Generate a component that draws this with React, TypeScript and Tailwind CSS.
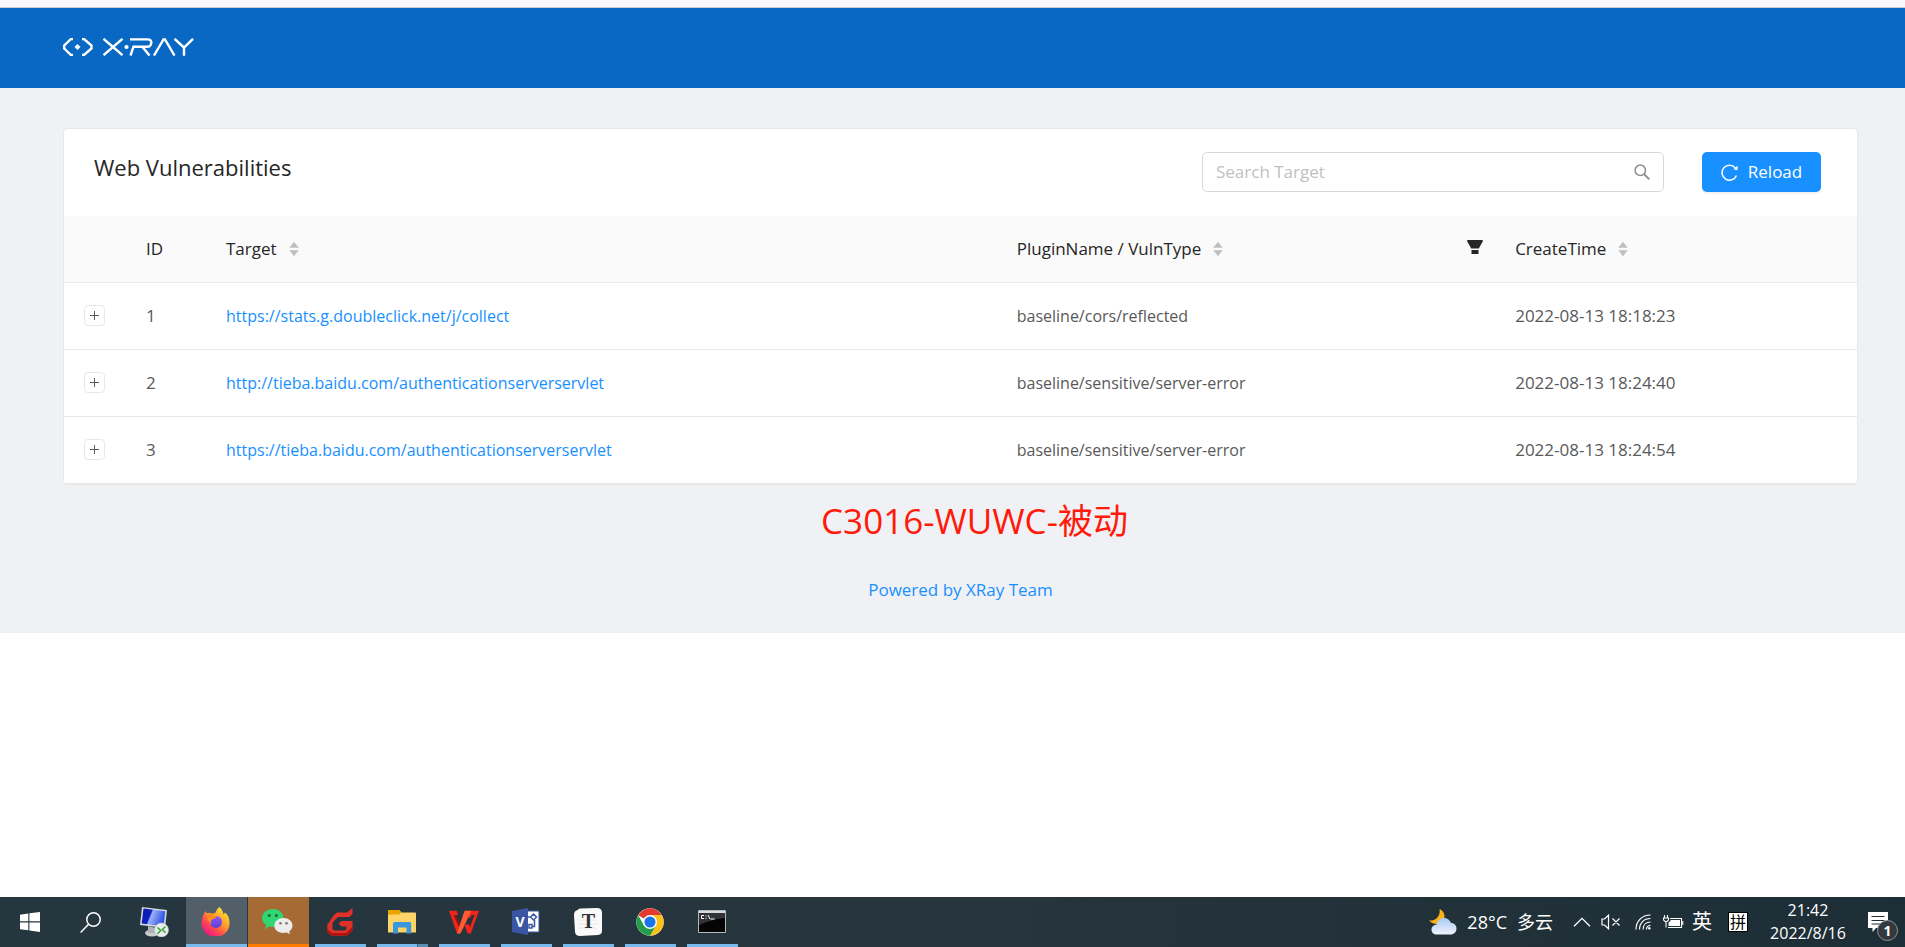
import type { ReactNode } from "react";

type Vulnerability = { id: number; target: string; plugin: string; time: string };

const rows: Vulnerability[] = [
  { id: 1, target: "https://stats.g.doubleclick.net/j/collect", plugin: "baseline/cors/reflected", time: "2022-08-13 18:18:23" },
  { id: 2, target: "http://tieba.baidu.com/authenticationserverservlet", plugin: "baseline/sensitive/server-error", time: "2022-08-13 18:24:40" },
  { id: 3, target: "https://tieba.baidu.com/authenticationserverservlet", plugin: "baseline/sensitive/server-error", time: "2022-08-13 18:24:54" },
];

function Logo() {
  return (
    <svg width="131" height="18" viewBox="0 0 131 18" fill="none" stroke="#fff" strokeWidth="2.400" role="img" aria-label="X-Ray">
      <path d="M10 1H8L1.200 7.500V10.500L8 17H10" />
      <path d="M19 1H21L28.500 7.500V10.500L21 17H19" />
      <path d="M14.500 6L17.500 9L14.500 12L11.500 9Z" fill="#fff" stroke="none" />
      <path d="M40.500 .8L59.500 17.200M59.500 .8L40.500 17.200" />
      <circle cx="63.500" cy="9" r="2.100" fill="#fff" stroke="none" />
      <path d="M67 1.400H84.500C87.500 1.400 88.500 3 88.300 4.800C88 7.500 86.500 8.700 84 8.700H70.500L67.500 17.500M79.500 9L86.500 17.500" />
      <path d="M91 17.500L100.500 1.500H102L111.500 17.500" />
      <path d="M111.500 .8L121 9.500L130 .8M121 9V17.800" />
    </svg>
  );
}

function SortArrows() {
  return (
    <svg className="ml-3 shrink-0" width="10" height="16" viewBox="0 0 10 16" fill="#bfbfbf" aria-hidden="true">
      <path d="M5 .8L9.800 6.800H.2Z" />
      <path d="M5 15.200L.2 9.200H9.800Z" />
    </svg>
  );
}

function HeadLabel({ children }: { children: ReactNode }) {
  return (
    <button type="button" className="flex items-center whitespace-nowrap">
      {children}
      <SortArrows />
    </button>
  );
}

function VulnTable() {
  return (
    <table className="w-full table-fixed border-collapse text-left text-[17px] leading-[26px]">
      <colgroup>
        <col className="w-[62px]" />
        <col className="w-[80px]" />
        <col className="w-[44.1%]" />
        <col className="w-[27.8%]" />
        <col />
      </colgroup>
      <thead className="bg-[#fafafa] text-[#262626]">
        <tr className="h-[66px] border-b border-[#e8e8e8]">
          <th aria-label="Expand" />
          <th className="px-5 font-normal">ID</th>
          <th className="px-5 font-normal"><HeadLabel>Target</HeadLabel></th>
          <th className="pr-3 pl-5 font-normal">
            <div className="flex items-center justify-between">
              <HeadLabel>PluginName / VulnType</HeadLabel>
              <button type="button" aria-label="Filter" className="pb-1">
                <svg width="16" height="14" viewBox="0 0 16 14" fill="#262626">
                  <path d="M.3 0H15.700V1.500L11.800 8.600H4.200L.3 1.500Z" />
                  <path d="M4.500 10H11.500V14H4.500Z" />
                </svg>
              </button>
            </div>
          </th>
          <th className="px-5 font-normal"><HeadLabel>CreateTime</HeadLabel></th>
        </tr>
      </thead>
      <tbody className="text-[#595959]">
        {rows.map((row) => (
          <tr key={row.id} className="h-[67px] border-b border-[#e8e8e8]">
            <td className="pl-5">
              <button type="button" aria-label={`Expand row ${row.id}`} className="flex size-[21px] items-center justify-center rounded-sm border border-[#e8e8e8] bg-white">
                <svg width="9" height="9" viewBox="0 0 9 9" fill="#595959"><path d="M4 0H5V4H9V5H5V9H4V5H0V4H4Z" /></svg>
              </button>
            </td>
            <td className="px-5">{row.id}</td>
            <td className="px-5 text-[16px]"><a href={row.target} className="text-[#1890ff]">{row.target}</a></td>
            <td className="px-5 text-[16px]">{row.plugin}</td>
            <td className="px-5 whitespace-nowrap">{row.time}</td>
          </tr>
        ))}
      </tbody>
    </table>
  );
}

function TaskItem({ label, children, state = "open" }: { label: string; children: ReactNode; state?: "idle" | "open" | "stacked" | "active" | "alert" }) {
  const bg = state === "active" ? "bg-[#525f68]" : state === "alert" ? "bg-[#a66a35]" : "";
  return (
    <button type="button" aria-label={label} className={`flex h-[50px] w-[61px] flex-col items-center ${bg}`}>
      <span className="flex flex-1 items-center justify-center pt-0.5 pr-0.5">{children}</span>
      {state === "active" && <span className="h-[3px] w-full bg-[#76b9ed]" />}
      {state === "alert" && <span className="h-[3px] w-full bg-[#ff7b00]" />}
      {state === "open" && <span className="h-[3px] w-[51px] bg-[#76b9ed]" />}
      {state === "stacked" && (
        <span className="flex h-[3px] w-[51px]">
          <span className="w-10 bg-[#76b9ed]" />
          <span className="flex-1 border-l border-[#3d6480] bg-[#5a8db5]" />
        </span>
      )}
      {state === "idle" && <span className="h-[3px]" />}
    </button>
  );
}

function Taskbar() {
  return (
    <footer className="mt-auto flex h-[50px] items-stretch justify-between bg-linear-to-r from-[#25363f] via-[#27353c] to-[#1d2e36] text-white">
      <div className="flex">
        <button type="button" aria-label="Start" className="flex w-[60px] items-center justify-center">
          <svg width="20" height="20" viewBox="0 0 20 20" fill="#fff"><path d="M0 2.700L8.300 1.500V9.300H0ZM9.400 1.300L20 0V9.300H9.400ZM0 10.400H8.300V18.300L0 17.200ZM9.400 10.400H20V20L9.400 18.500Z" /></svg>
        </button>
        <button type="button" aria-label="Search" className="mr-1 flex w-[60px] items-center justify-center">
          <svg width="21" height="21" viewBox="0 0 21 21" fill="none" stroke="#fff" strokeWidth="1.500"><circle cx="13.500" cy="7.500" r="6.700" /><path d="M8.600 12.200L.6 20.400" /></svg>
        </button>
        <div className="flex gap-px">
          <TaskItem label="Remote Desktop" state="idle">
            <svg width="30" height="30" viewBox="0 0 30 30">
              <defs><linearGradient id="screen" x1="0" y1="0" x2="1" y2="0.300"><stop offset="0" stopColor="#10189a" /><stop offset=".42" stopColor="#0a1fc8" /><stop offset=".48" stopColor="#9db2fa" /><stop offset="1" stopColor="#2f56e6" /></linearGradient></defs>
              <ellipse cx="13" cy="26" rx="7" ry="3.500" fill="#c9cdd0" />
              <path d="M9 19L17 21V26H9Z" fill="#aeb4b8" />
              <path d="M3 0L28 3L26 21L1 18Z" fill="#d4d8dc" />
              <path d="M4.500 1.600L26.300 4.300L24.500 19.200L2.700 16.600Z" fill="url(#screen)" />
              <circle cx="22.500" cy="23" r="7" fill="#e9ebec" stroke="#bfc4c7" strokeWidth=".6" />
              <path d="M18.500 20.500L21.700 23.500L18.500 26.700M26.500 19.500L23.400 22.500L26.500 25.700" fill="none" stroke="#39a935" strokeWidth="1.600" />
            </svg>
          </TaskItem>
          <TaskItem label="Firefox" state="active">
            <svg width="29" height="29" viewBox="0 0 29 29">
              <defs>
                <linearGradient id="fox" x1=".85" y1=".1" x2=".2" y2=".95"><stop offset="0" stopColor="#ffe234" /><stop offset=".4" stopColor="#ff9a2a" /><stop offset=".7" stopColor="#ff4450" /><stop offset="1" stopColor="#e3178f" /></linearGradient>
                <linearGradient id="globe" x1="0" y1="0" x2="0" y2="1"><stop offset="0" stopColor="#9059ff" /><stop offset="1" stopColor="#5b3fd0" /></linearGradient>
              </defs>
              <path d="M18.500 0C21 2.500 22 4.500 22.500 7.500L24 5.500C26.500 7.500 28.500 11 28.500 15A14 14 0 1 1 1.500 11C2 8 3.500 6 4.300 4C4.800 5.300 5.500 6 6.200 6.300C7.500 5.500 9.500 5.500 11 6.500C14 6.500 14.500 6 15 4.500C15.500 2.700 17 1 18.500 0Z" fill="url(#fox)" />
              <circle cx="15" cy="15" r="6" fill="url(#globe)" />
              <path d="M6 6.200C9 5.500 11 7 12 8.800L15.500 9.600C15.300 11 13.500 11.800 11.500 12.200C9.500 13.500 9.500 15 9.800 17C7.500 15 6 10 6 6.200Z" fill="#ff8a24" />
            </svg>
          </TaskItem>
          <TaskItem label="WeChat" state="alert">
            <svg width="31" height="26" viewBox="0 0 31 26">
              <path d="M11 0C17 0 21.500 4 21.500 9S17 18 11 18C9.500 18 8.200 17.800 7 17.300L3.200 20.500L4 15.800C1.500 14.200 0 11.800 0 9C0 4 5 0 11 0Z" fill="#2fd673" />
              <circle cx="7.200" cy="6.500" r="1.500" fill="#176b3c" /><circle cx="14.300" cy="6.500" r="1.500" fill="#176b3c" />
              <path d="M21.500 9C26.500 9 30.500 12.200 30.500 16.500C30.500 19 29.300 21 27.300 22.300L27.800 25.300L24.800 23.500C18 25.300 12.300 21.500 12.300 16.500C12.300 12.200 16.500 9 21.500 9Z" fill="#ececec" />
              <circle cx="18.500" cy="14.300" r="1.300" fill="#777" /><circle cx="24.500" cy="14.300" r="1.300" fill="#777" />
            </svg>
          </TaskItem>
          <TaskItem label="Foxmail">
            <svg width="26" height="28" viewBox="0 0 26 28">
              <path d="M25.500 0V6L22.500 9H11L5.500 14.500V21L7 22.500H18L19.500 21V18.500H14.500L11.500 15.500L14.500 13H25.500V22.500L20 27.500H4L.3 24V17L6.500 7.500L10 4.500H20Z" fill="#e0302a" />
              <path d="M.3 21V24L4 27.500H20L25.500 22.500V19L19 25H5Z" fill="#b3120f" />
            </svg>
          </TaskItem>
          <TaskItem label="File Explorer" state="stacked">
            <svg width="28" height="24" viewBox="0 0 28 24">
              <path d="M0 1C0 .4 .4 0 1 0H11L13.500 2.500H27C27.600 2.500 28 3 28 3.500V22.500H0Z" fill="#fdd467" />
              <path d="M0 1C0 .4 .4 0 1 0H11L13.500 2.300L11 4.500H0Z" fill="#e8a400" />
              <path d="M5 23.500V14C5 12.800 5.700 12 7 12H21.500C22.500 12 23.200 12.800 23.200 14V23.500H18.500V17.500H10V23.500Z" fill="#3a96dd" />
            </svg>
          </TaskItem>
          <TaskItem label="WPS Office">
            <svg width="30" height="24" viewBox="0 0 30 24">
              <path d="M0 .8H7.500L13 15L9.800 23.500H8Z" fill="#f2231d" />
              <path d="M4.500 5H16L10.500 18Z" fill="#8d1512" />
              <path d="M7 5L11 14.500L15 5Z" fill="#25343c" />
              <path d="M19.500 14L22 8L16.500 6.500L18.500 .8H30L21.800 23.500H18.800L15.500 15Z" fill="#f2231d" />
              <path d="M19 13.500L21 17L25.500 5H22.500Z" fill="#25343c" />
              <path d="M15.500 .8H22.500L11.500 23.500H8Z" fill="#ff5a30" />
            </svg>
          </TaskItem>
          <TaskItem label="Visio">
            <svg width="28" height="27" viewBox="0 0 28 27">
              <path d="M14 3H27V24H14Z" fill="#fff" stroke="#3955a3" />
              <path d="M17 16.500H20V20H17ZM21.500 6L24.500 9L21.500 12L18.500 9ZM20 18.500H22.500V12M18.500 9H16" fill="none" stroke="#3955a3" strokeWidth="1.500" />
              <path d="M0 3L16 0V27L0 24Z" fill="#3955a3" />
              <text x="8" y="18.500" textAnchor="middle" fontFamily="Open Sans" fontWeight="700" fontSize="14" fill="#fff">V</text>
            </svg>
          </TaskItem>
          <TaskItem label="Typora">
            <svg width="28" height="28" viewBox="0 0 28 28">
              <path d="M4 2Q4 .5 6 .4L23 0Q28 0 28 5V23Q28 26.500 24 27L6 28Q1.500 28 1 24L0 7Q0 2.500 4 2Z" fill="#fafafa" />
              <path d="M5 8H23M5 12H23M5 16H23M5 20H23" stroke="#e4e4e4" strokeWidth=".8" />
              <text x="14.500" y="20" textAnchor="middle" fontFamily="Liberation Serif" fontWeight="700" fontSize="20" fill="#333">T</text>
            </svg>
          </TaskItem>
          <TaskItem label="Chrome">
            <svg width="28" height="28" viewBox="0 0 48 48">
              <circle cx="24" cy="24" r="23.500" fill="#fff" />
              <path d="M24 24L3.700 12.300A23.500 23.500 0 0 1 44.300 12.300H24Z" fill="#e33b2e" />
              <path d="M44.300 12.300A23.500 23.500 0 0 1 24 47.500L34.200 29.900L24 12.300Z" fill="#fbc116" />
              <path d="M3.700 12.300A23.500 23.500 0 0 0 24 47.500L34.200 29.900L24 30L13.800 29.900Z" fill="#249c4a" />
              <circle cx="24" cy="24" r="12" fill="#fff" /><circle cx="24" cy="24" r="9.500" fill="#1a73e8" />
            </svg>
          </TaskItem>
          <TaskItem label="Command Prompt">
            <svg width="28" height="23" viewBox="0 0 28 23">
              <path d="M.5 .5H27.500V22.500H.5Z" fill="#050505" stroke="#b4b8ba" />
              <path d="M1 1H27V3H1Z" fill="#d8dadb" />
              <path d="M1 3H27V8C18 9 8 12 1 15Z" fill="#303234" />
              <path d="M6 5.500H3.500V8.500H6M8 5.500V6.500M8 7.800V8.800M10 5L12 9M12.500 9H16.500" fill="none" stroke="#fff" />
            </svg>
          </TaskItem>
        </div>
      </div>

      <div className="flex items-center pr-[7px]">
        <button type="button" className="flex items-center gap-2.5 text-[18px] whitespace-nowrap">
          <svg width="28" height="26" viewBox="0 0 28 26" aria-hidden="true">
            <defs><linearGradient id="cloud" x1="0" y1="0" x2="0" y2="1"><stop offset="0" stopColor="#a9c8f2" /><stop offset="1" stopColor="#eef4fd" /></linearGradient></defs>
            <path d="M10.500 0C15.500 2 17 8 14 12C11 16 4 16 0 11.500C6 12.500 12 7 10.500 0Z" fill="#fbb117" />
            <path d="M8 25.500C4.500 25.500 2.500 23.500 2.500 20.500C2.500 17.500 5 15.800 7.500 15.800C8 12 11 9 15 9C18.500 9 21 11 22 14C25.500 14 27.500 16.500 27.500 19.500C27.500 23 25 25.500 21.500 25.500Z" fill="url(#cloud)" />
          </svg>
          <span>28°C</span>
          <span>多云</span>
        </button>
        <button type="button" aria-label="Show hidden icons" className="ml-5">
          <svg width="18" height="10" viewBox="0 0 18 10" fill="none" stroke="#fff" strokeWidth="1.300"><path d="M1 9.300L9 1.300L17 9.300" /></svg>
        </button>
        <button type="button" aria-label="Muted" className="ml-2.5">
          <svg width="20" height="16" viewBox="0 0 20 16" fill="none" stroke="#fff" strokeWidth="1.200"><path d="M1 5H3.500L7.500 1.200V14.800L3.500 11H1ZM11.500 4.500L18.500 11.500M18.500 4.500L11.500 11.500" /></svg>
        </button>
        <button type="button" aria-label="Wi-Fi" className="ml-3.5">
          <svg width="16" height="16" viewBox="0 0 16 16" fill="none" stroke="#fff" strokeWidth="1.200"><path d="M1 15.500C1 7 7 1 15.500 1M4.500 15.500C4.500 9 9 4.500 15.500 4.500M8 15.500C8 11 11 8 15.500 8" /><path d="M11.500 15.500C11.500 13 13 11.500 15.500 11.500" /><circle cx="14.300" cy="14.300" r="1.200" fill="#fff" stroke="none" /></svg>
        </button>
        <button type="button" aria-label="Battery" className="ml-3">
          <svg width="21" height="14" viewBox="0 0 21 14" fill="none" stroke="#fff" strokeWidth="1.100"><path d="M1.500 0V3M4.500 0V3M.5 3H5.500V5L4 6.500H2L.5 5ZM3 6.500V12.500M7 3.500H18.500V12.500H5M19.800 6V10" /><path d="M7.500 5H17V11H5.500V7.500L7.500 6Z" fill="#fff" stroke="none" /></svg>
        </button>
        <button type="button" className="ml-2 text-[20px] leading-none">英</button>
        <button type="button" className="ml-4 flex size-5 items-center justify-center border border-black bg-white text-[16px] leading-none text-black">拼</button>
        <button type="button" className="ml-5 flex w-[80px] flex-col items-center text-[16px] leading-[23px]">
          <span>21:42</span>
          <span>2022/8/16</span>
        </button>
        <button type="button" aria-label="1 new notification" className="relative ml-5 h-[30px] w-[30px]">
          <svg width="20" height="20" viewBox="0 0 20 20"><path d="M0 0H20V16H8L4.500 20V16H0Z" fill="#fff" /><path d="M3.500 4.500H16.500M3.500 8.500H16.500M3.500 12H12" stroke="#1f2e36" strokeWidth="1.200" /></svg>
          <span className="absolute right-0 -bottom-1 flex size-[21px] items-center justify-center rounded-full border border-[#909598] bg-[#33393d] text-[14px] font-bold">1</span>
        </button>
      </div>
    </footer>
  );
}

export default function App() {
  return (
    <div className="flex min-h-screen flex-col bg-white font-['Open_Sans','Noto_Sans_CJK_SC',sans-serif]">
      <div className="h-2 border-b border-[#cccccc] bg-[#f9f9fb]" />
      <header className="flex h-20 items-start bg-[#0868c3] pt-[30px] pl-[63px]">
        <a href="#" aria-label="X-Ray home"><Logo /></a>
      </header>
      <main className="bg-[#f0f1f5] pt-10 pr-[47px] pb-[30px] pl-[63px]">
        <section className="overflow-hidden rounded-sm border border-[#e8e8e8] bg-white">
          <div className="flex items-start justify-between pt-[23px] pr-9 pb-6 pl-[30px]">
            <h1 className="text-[22px] leading-[30px] text-[#262626]">Web Vulnerabilities</h1>
            <div className="flex gap-[38px]">
              <label className="flex h-10 w-[462px] items-center rounded-[5px] border border-[#d9d9d9] px-[13px]">
                <input type="text" aria-label="Search Target" placeholder="Search Target" className="min-w-0 flex-1 text-[17px] outline-none placeholder:text-[#bfbfbf]" />
                <svg width="16" height="16" viewBox="0 0 16 16" fill="none" stroke="#8c8c8c" strokeWidth="1.500" aria-hidden="true"><circle cx="6.300" cy="6.300" r="5.200" /><path d="M10 10L15.300 15.300" strokeWidth="1.800" /></svg>
              </label>
              <button type="button" className="flex h-10 w-[119px] items-center justify-center gap-2.5 rounded-[5px] bg-[#1890ff] text-[17px] text-white shadow-[0_2px_0_rgba(0,0,0,0.05)]">
                <svg width="17" height="17" viewBox="0 0 17 17" fill="none" stroke="#fff" strokeWidth="1.500" aria-hidden="true"><path d="M15.500 11.500A7.500 7.500 0 1 1 14.300 3.800" /><path d="M16.500 1.800V6.200L12.300 5.300Z" fill="#fff" stroke="none" /></svg>
                Reload
              </button>
            </div>
          </div>
          <VulnTable />
        </section>
        <p className="mt-2.5 pl-7 text-center text-[35px] leading-[52px] text-[#ff1a0a]">C3016-WUWC-被动</p>
        <p className="mt-[30px] text-center text-[17px] leading-[26px]">
          <a href="#" className="text-[#1890ff]">Powered by XRay Team</a>
        </p>
      </main>
      <Taskbar />
    </div>
  );
}
